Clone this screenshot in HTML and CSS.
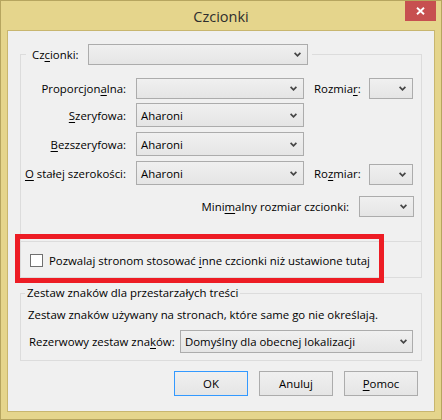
FILE: index.html
```html
<!DOCTYPE html>
<html lang="pl">
<head>
<meta charset="utf-8">
<title>Czcionki</title>
<link rel="stylesheet" href="styles.css">
</head>
<body>
<div class="window">
  <div class="titlebar">
    <span class="title">Czcionki</span>
    <button class="close" aria-label="Zamknij">
      <svg width="9" height="8" viewBox="0 0 9 8"><path d="M1 0.8L8 7.2M8 0.8L1 7.2" stroke="#fff" stroke-width="1.9" fill="none"/></svg>
    </button>
  </div>
  <div class="client">
    <fieldset class="group fonts">
      <legend class="legend-combo">
        <div class="legend-inner">
          <label class="legend-label">Cz<u>c</u>ionki:</label>
          <div class="combo w-wide"><span class="val"></span><svg class="chev" viewBox="0 0 7 5"><path d="M0.6 0.8L3.5 3.8L6.4 0.8"/></svg></div>
        </div>
      </legend>
      <div class="font-grid">
        <label class="lbl">Proporcjon<u>a</u>lna:</label>
        <div class="combo w-mid h-short"><span class="val"></span><svg class="chev" viewBox="0 0 7 5"><path d="M0.6 0.8L3.5 3.8L6.4 0.8"/></svg></div>
        <label class="lbl2">Rozmia<u>r</u>:</label>
        <div class="combo w-small h-short"><span class="val"></span><svg class="chev" viewBox="0 0 7 5"><path d="M0.6 0.8L3.5 3.8L6.4 0.8"/></svg></div>

        <label class="lbl"><u>S</u>zeryfowa:</label>
        <div class="combo w-mid h-tall"><span class="val">Aharoni</span><svg class="chev" viewBox="0 0 7 5"><path d="M0.6 0.8L3.5 3.8L6.4 0.8"/></svg></div>
        <span></span><span></span>

        <label class="lbl"><u>B</u>ezszeryfowa:</label>
        <div class="combo w-mid h-tall"><span class="val">Aharoni</span><svg class="chev" viewBox="0 0 7 5"><path d="M0.6 0.8L3.5 3.8L6.4 0.8"/></svg></div>
        <span></span><span></span>

        <label class="lbl"><u>O</u> stałej szerokości:</label>
        <div class="combo w-mid h-tall"><span class="val">Aharoni</span><svg class="chev" viewBox="0 0 7 5"><path d="M0.6 0.8L3.5 3.8L6.4 0.8"/></svg></div>
        <label class="lbl2">Ro<u>z</u>miar:</label>
        <div class="combo w-small h-short end"><span class="val"></span><svg class="chev" viewBox="0 0 7 5"><path d="M0.6 0.8L3.5 3.8L6.4 0.8"/></svg></div>
      </div>
      <div class="min-row">
        <label>Mini<u>m</u>alny rozmiar czcionki:</label>
        <div class="combo w-min h-short"><span class="val"></span><svg class="chev" viewBox="0 0 7 5"><path d="M0.6 0.8L3.5 3.8L6.4 0.8"/></svg></div>
      </div>
    </fieldset>

    <div class="check-row">
      <span class="checkbox"></span>
      <label>Pozwalaj stronom stosować <u>i</u>nne czcionki niż ustawione tutaj</label>
    </div>

    <fieldset class="group charset">
      <legend class="legend-text">Zestaw znaków dla przestarzałych treści</legend>
      <div class="charset-body">
        <div class="desc">Zestaw znaków używany na stronach, które same go nie określają.</div>
        <div class="charset-row">
          <label>Rezerwowy zestaw zna<u>k</u>ów:</label>
          <div class="combo w-charset h-charset"><span class="val">Domyślny dla obecnej lokalizacji</span><svg class="chev" viewBox="0 0 7 5"><path d="M0.6 0.8L3.5 3.8L6.4 0.8"/></svg></div>
        </div>
      </div>
    </fieldset>

    <div class="buttons">
      <button class="btn default">OK</button>
      <button class="btn">Anuluj</button>
      <button class="btn"><u>P</u>omoc</button>
    </div>

    <div class="highlight"></div>
  </div>
</div>
</body>
</html>
```

FILE: styles.css
```css
* { box-sizing: border-box; }

html, body {
  margin: 0;
  padding: 0;
}

body {
  width: 442px;
  height: 420px;
  background: #e5d58c;
  font-family: "Open Sans", "Noto Sans", sans-serif;
  font-size: 11.4px;
  color: #000;
}

u { text-underline-offset: 2px; }

.window {
  width: 442px;
  height: 420px;
  border: 1px solid #b6a55f;
  background: #e5d58c;
  display: flex;
  flex-direction: column;
}

.titlebar {
  height: 29px;
  flex: none;
  display: grid;
  grid-template-columns: 1fr auto 1fr;
  align-items: center;
}

.title {
  grid-column: 2;
  font-size: 14.5px;
  color: #2e2e2e;
  padding-top: 1px;
}

.close {
  grid-column: 3;
  justify-self: end;
  align-self: start;
  width: 31px;
  height: 20px;
  margin-right: 5px;
  background: #c75050;
  border: 0;
  padding: 0;
  display: flex;
  align-items: center;
  justify-content: center;
}

.client {
  position: relative;
  flex: 1;
  margin: 0 6px 7px;
  border: 1px solid #c8b66f;
  background: #f0f0f0;
  padding-top: 13px;
  display: flex;
  flex-direction: column;
}

.group {
  margin: 0 12px;
  padding: 0;
  border: 1px solid #dcdcdc;
  min-width: 0;
}

.fonts {
  padding: 13px 7px 24px 0;
}

.legend-combo {
  margin-left: 5px;
  padding: 0 4px 0 6px;
}

.legend-inner {
  display: flex;
  align-items: center;
}

.legend-label {
  width: 56px;
}

/* combobox */
.combo {
  display: flex;
  align-items: center;
  justify-content: space-between;
  border: 1px solid #acacac;
  background: linear-gradient(#f0f0f0, #e5e5e5);
  padding: 0 6px 0 4px;
  white-space: nowrap;
}

.chev {
  width: 7px;
  height: 5px;
  flex: none;
}

.chev path {
  fill: none;
  stroke: #454545;
  stroke-width: 1.7;
}

.w-wide { width: 220px; height: 21px; }
.w-mid { width: 168px; }
.w-small { width: 44px; }
.w-min { width: 55px; }
.w-charset { width: 233px; }
.h-short { height: 21px; }
.h-tall { height: 24px; }
.h-charset { height: 23px; padding-right: 5px; }

.font-grid {
  display: grid;
  grid-template-columns: 105px 168px 45px 44px;
  grid-template-rows: 20px 24px 24px 24px;
  column-gap: 10px;
  row-gap: 5px;
  align-items: center;
}

.font-grid .h-short { align-self: start; }
.font-grid .h-short.end { align-self: end; }

.lbl { text-align: right; }
.lbl2 { text-align: left; }

.min-row {
  margin-top: 11px;
  display: flex;
  justify-content: flex-end;
  align-items: center;
  gap: 10px;
}

.check-row {
  margin: 0 12px;
  height: 36px;
  border: 1px solid #dcdcdc;
  border-top: 0;
  display: flex;
  align-items: center;
  padding: 2px 0 0 9px;
  gap: 6px;
}

.checkbox {
  width: 13px;
  height: 13px;
  border: 1px solid #707070;
  background: #fff;
  flex: none;
}

.charset {
  margin-top: 7px;
  padding: 0;
}

.charset-body {
  padding: 6px 7px 7px 7px;
}

.legend-text {
  margin-left: 4px;
  padding: 0 2px;
  line-height: 16px;
}

.desc {
  line-height: 16px;
}

.charset-row {
  margin-top: 7px;
  display: flex;
  align-items: center;
}

.charset-row label {
  width: 152px;
  padding-left: 1px;
}

.buttons {
  display: flex;
  justify-content: flex-end;
  gap: 11px;
  margin: 10px 16px 0 0;
}

.btn {
  width: 74px;
  height: 25px;
  border: 1px solid #acacac;
  background: linear-gradient(#f0f0f0, #e5e5e5);
  font: inherit;
  color: #000;
  padding: 0;
}

.btn.default {
  border-color: #3399ff;
}

.highlight {
  position: absolute;
  left: 7px;
  top: 203px;
  width: 369px;
  height: 49px;
  border: 5px solid #ed1c24;
}
```
